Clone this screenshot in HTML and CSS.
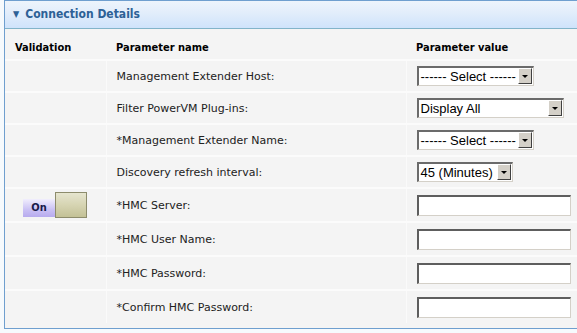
FILE: index.html
```html
<!DOCTYPE html>
<html lang="en">
<head>
    <meta charset="UTF-8">
    <title>Connection Details</title>
    <link rel="stylesheet" href="styles.css">
</head>
<body>
    <div class="panel">
        <div class="panel-title"><span class="twisty">&#9660;</span>Connection Details</div>

        <table class="params">
            <thead>
                <tr>
                    <th class="col-valid">Validation</th>
                    <th class="col-name">Parameter name</th>
                    <th class="col-value">Parameter value</th>
                </tr>
            </thead>
            <tbody>
                <tr class="row-select">
                    <td></td>
                    <td>Management Extender Host:</td>
                    <td><div class="combo w-sel"><span class="combo-text">------ Select ------</span><span class="combo-btn"></span></div></td>
                </tr>
                <tr class="row-select">
                    <td></td>
                    <td>Filter PowerVM Plug-ins:</td>
                    <td><div class="combo w-all"><span class="combo-text">Display All</span><span class="combo-btn"></span></div></td>
                </tr>
                <tr class="row-select">
                    <td></td>
                    <td>*Management Extender Name:</td>
                    <td><div class="combo w-sel"><span class="combo-text">------ Select ------</span><span class="combo-btn"></span></div></td>
                </tr>
                <tr class="row-select">
                    <td></td>
                    <td>Discovery refresh interval:</td>
                    <td><div class="combo w-min"><span class="combo-text">45 (Minutes)</span><span class="combo-btn"></span></div></td>
                </tr>
                <tr class="row-input">
                    <td class="toggle-cell">
                        <div class="toggle"><span class="toggle-on">On</span><span class="toggle-knob"></span></div>
                    </td>
                    <td>*HMC Server:</td>
                    <td><input type="text" class="field"></td>
                </tr>
                <tr class="row-input">
                    <td></td>
                    <td>*HMC User Name:</td>
                    <td><input type="text" class="field"></td>
                </tr>
                <tr class="row-input">
                    <td></td>
                    <td>*HMC Password:</td>
                    <td><input type="password" class="field"></td>
                </tr>
                <tr class="row-input">
                    <td></td>
                    <td>*Confirm HMC Password:</td>
                    <td><input type="password" class="field"></td>
                </tr>
            </tbody>
        </table>
    </div>
</body>
</html>
```

FILE: styles.css
```css
body {
    margin: 0;
    padding: 0 0 0 4px;
    background-color: #f6fafd;
    font-family: "DejaVu Sans", Verdana, sans-serif;
    overflow: hidden;
}
.panel {
    width: 620px;
    border: 1px solid #6f9fcf;
    background-color: #f4f4f4;
    padding-bottom: 5px;
}
.panel-title {
    height: 27px;
    line-height: 27px;
    padding-left: 8px;
    font-family: "DejaVu Sans Condensed", "DejaVu Sans", sans-serif;
    font-weight: bold;
    font-size: 12px;
    color: #2d6196;
    background: linear-gradient(#edf4fc, #e3eefb 40%, #cfe3fb);
    border-bottom: 1px solid #82b4c9;
}
.twisty {
    font-size: 9px;
    margin-right: 6px;
    vertical-align: 1px;
}
.params {
    border-collapse: collapse;
    width: 100%;
}
.params th {
    height: 24px;
    text-align: left;
    font-family: "DejaVu Sans Condensed", "DejaVu Sans", sans-serif;
    font-size: 11px;
    font-weight: bold;
    color: #000;
    padding: 6px 0 0 10px;
}
.params th.col-valid {
    width: 91px;
}
.params th.col-name {
    width: 290px;
}
.params td {
    font-size: 11px;
    color: #222;
    padding: 0 0 0 10px;
    border-top: 2px solid #fbfbfb;
    border-right: 1px solid #fafafa;
}
.params td:last-child {
    border-right: none;
}
.row-select td {
    height: 30px;
}
.row-input td {
    height: 32px;
}

/* combo box, old windows look */
.combo {
    display: flex;
    height: 20px;
    box-sizing: border-box;
    border-top: 2px solid #6b6b6b;
    border-left: 2px solid #6b6b6b;
    border-right: 1px solid #d4d0c8;
    border-bottom: 1px solid #d4d0c8;
    background-color: #fff;
    font-family: "Liberation Sans", Arial, sans-serif;
    font-size: 13px;
    color: #000;
}
.w-sel { width: 117px; }
.w-all { width: 147px; }
.w-min { width: 96px; }
.combo-text {
    flex: 1;
    line-height: 17px;
    padding-left: 2px;
    white-space: nowrap;
    overflow: hidden;
}
.combo-btn {
    width: 14px;
    margin: 0 1px 1px 0;
    box-sizing: border-box;
    background-color: #d4d0c8;
    border-top: 1px solid #fff;
    border-left: 1px solid #fff;
    border-right: 1px solid #404040;
    border-bottom: 1px solid #404040;
    display: flex;
    align-items: center;
    justify-content: center;
}
.combo-btn::after {
    content: "";
    border-left: 3px solid transparent;
    border-right: 3px solid transparent;
    border-top: 3px solid #000;
}

.field {
    display: block;
    width: 154px;
    height: 21px;
    box-sizing: border-box;
    margin: 0;
    padding: 0 2px;
    border-top: 2px solid #5e5e5e;
    border-left: 2px solid #5e5e5e;
    border-right: 1px solid #d4d0c8;
    border-bottom: 1px solid #d4d0c8;
    background-color: #fff;
    outline: none;
}

/* validation switch */
.toggle-cell {
    padding-left: 18px !important;
}
.toggle {
    display: flex;
    align-items: flex-end;
}
.toggle-on {
    width: 32px;
    height: 18px;
    line-height: 18px;
    text-align: center;
    font-family: "DejaVu Sans Condensed", "DejaVu Sans", sans-serif;
    font-weight: bold;
    font-size: 11px;
    color: #1a1a4a;
    background: linear-gradient(#f1eefd, #c9c0f4 60%, #b7abee);
    margin-bottom: 1px;
}
.toggle-knob {
    width: 32px;
    height: 26px;
    box-sizing: border-box;
    border: 1px solid #8d8c6c;
    background: linear-gradient(#e6e5cf, #d6d4b2 50%, #c3c196);
}
```
